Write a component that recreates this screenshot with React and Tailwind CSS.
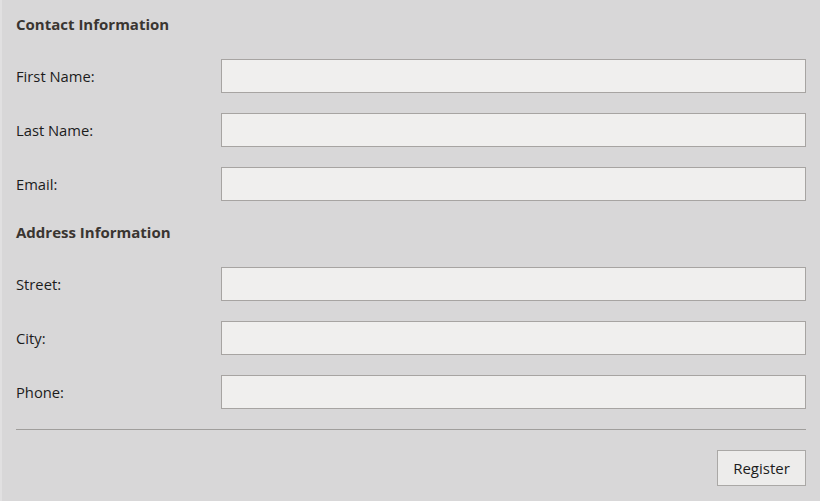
import { useState } from 'react';

const contactFields = [
  { id: 'firstName', label: 'First Name:' },
  { id: 'lastName', label: 'Last Name:' },
  { id: 'email', label: 'Email:' },
];

const addressFields = [
  { id: 'street', label: 'Street:' },
  { id: 'city', label: 'City:' },
  { id: 'phone', label: 'Phone:' },
];

function Field({ label, value, onChange }) {
  return (
    <div className="flex items-center h-[34px]">
      <label className="w-[205px] shrink-0 text-[14.75px] text-[#1c1c1c]">{label}</label>
      <input
        value={value}
        onChange={e => onChange(e.target.value)}
        className="flex-1 h-[34px] bg-[#f0efee] border border-[#a7a4a2] outline-none px-2 text-[14px]"
      />
    </div>
  );
}

export default function App() {
  const [form, setForm] = useState({});
  const set = id => v => setForm(f => ({ ...f, [id]: v }));

  return (
    <div
      className="w-[820px] h-[501px] bg-[#d8d7d8] border-l-2 border-[#e1e0e1] pl-[14px] pr-[14px] pt-[13px]"
      style={{ fontFamily: '"Open Sans", "Noto Sans", sans-serif' }}
    >
      <h2 className="text-[15px] leading-[22px] font-bold text-[#3a3531]">Contact Information</h2>
      <div className="flex flex-col gap-5 mt-6">
        {contactFields.map(f => (
          <Field key={f.id} label={f.label} value={form[f.id] || ''} onChange={set(f.id)} />
        ))}
      </div>

      <h2 className="text-[15px] leading-[22px] font-bold text-[#3a3531] mt-5">Address Information</h2>
      <div className="flex flex-col gap-5 mt-6">
        {addressFields.map(f => (
          <Field key={f.id} label={f.label} value={form[f.id] || ''} onChange={set(f.id)} />
        ))}
      </div>

      <div className="h-px bg-[#a09e9c] mt-5" />

      <div className="flex justify-end mt-5">
        <button className="w-[89px] h-[36px] bg-[#edeceb] border border-[#aaa8a6] text-[15px] text-[#1c1c1c]">
          Register
        </button>
      </div>
    </div>
  );
}
